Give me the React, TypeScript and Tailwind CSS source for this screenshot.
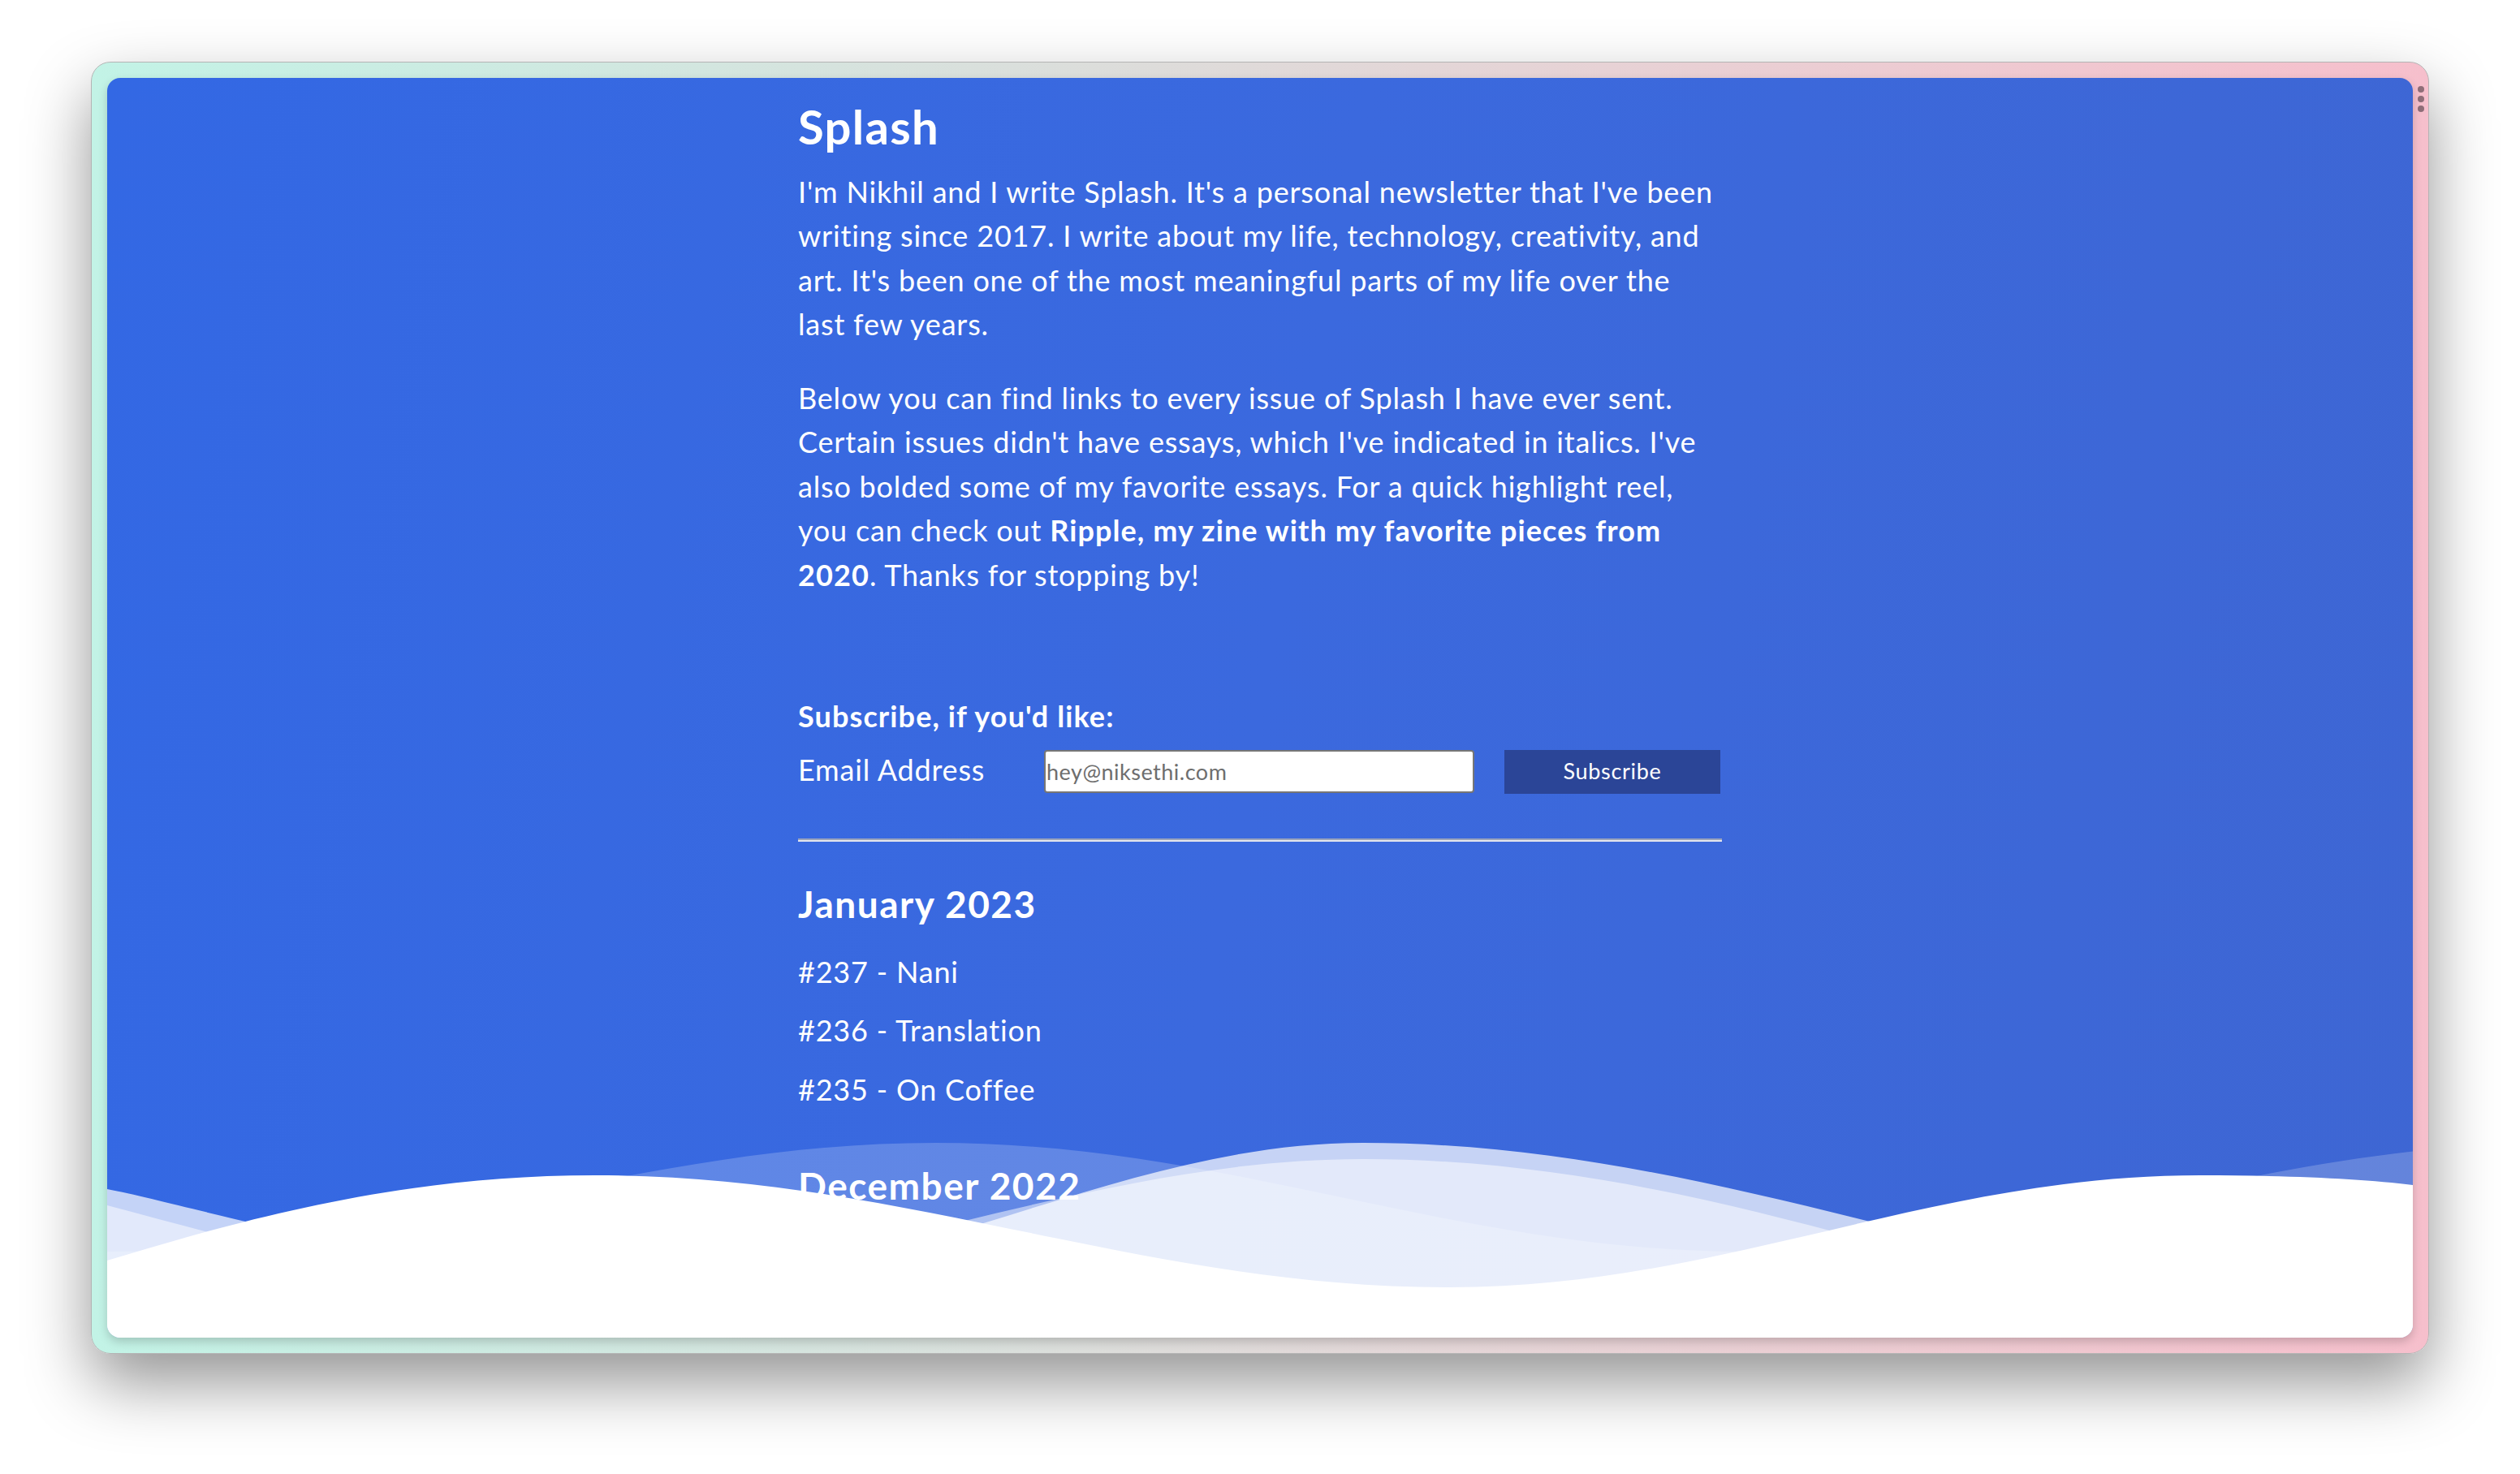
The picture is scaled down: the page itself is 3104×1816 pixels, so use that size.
import React from 'react';

const issues = [
  { id: 237, title: 'Nani' },
  { id: 236, title: 'Translation' },
  { id: 235, title: 'On Coffee' },
];

const Waves = () => (
  <svg
    className="absolute bottom-0 left-0 w-full h-[300px] pointer-events-none"
    viewBox="0 0 2840 300"
    preserveAspectRatio="none"
  >
    {/* back layer */}
    <path
      d="M0,194 C364,194 656,60 1020,60 C1384,60 1656,194 2020,194 C2384,194 2656,60 3020,60 L3020,300 L0,300 Z"
      fill="rgba(255,255,255,0.2)"
    />
    <path
      d="M0,117 C120,140 400,230 700,230 C1000,230 1250,60 1547,60 C1900,60 2200,180 2500,230 L2840,260 L2840,300 L0,300 Z"
      fill="rgba(255,255,255,0.71)"
    />
    <path
      d="M0,137 C200,190 350,235 550,235 C900,235 1200,80 1547,80 C1900,80 2200,200 2400,240 L2840,270 L2840,300 L0,300 Z"
      fill="rgba(255,255,255,0.5)"
    />
    {/* front white */}
    <path
      d="M0,205 C150,160 350,100 601,100 C985,100 1270,238 1654,238 C1990,238 2242,100 2578,100 C2680,100 2780,104 2840,112 L2840,300 L0,300 Z"
      fill="#ffffff"
    />
  </svg>
);

export default function App() {
  return (
    <div className="w-full h-[1816px] bg-white flex justify-center pt-[76px] font-['Lato',sans-serif]">
      <div className="relative w-[2880px] h-[1592px] p-[19px] rounded-[24px] border border-[#b4b4b4] bg-gradient-to-r from-[#c2f3e6] to-[#f6bfcc] shadow-[0_36px_80px_rgba(0,0,0,0.42)]">
        <div className="absolute right-[5px] top-[29px] flex flex-col gap-[4px]">
          <span className="w-[8px] h-[8px] rounded-full bg-[#8f6e78]" />
          <span className="w-[8px] h-[8px] rounded-full bg-[#8f6e78]" />
          <span className="w-[8px] h-[8px] rounded-full bg-[#8f6e78]" />
        </div>

        <div className="relative w-full h-full overflow-hidden rounded-[16px] bg-[linear-gradient(100deg,#3368e4_0%,#3b69de_50%,#3e66d3_100%)] shadow-[0_5px_12px_rgba(0,0,0,0.18)]">
          <div className="w-[1138px] mx-auto pt-[25px] text-white tracking-[0.8px]">
            <h1 className="text-[58px] leading-[1.2] font-bold tracking-[1.3px]">Splash</h1>

            <p className="mt-[18px] text-[36px] leading-[54.5px]">
              I'm Nikhil and I write Splash. It's a personal newsletter that I've been writing since 2017. I write
              about my life, technology, creativity, and art. It's been one of the most meaningful parts of my life
              over the last few years.
            </p>
            <p className="mt-[36px] text-[36px] leading-[54.5px]">
              Below you can find links to every issue of Splash I have ever sent. Certain issues didn't have essays,
              which I've indicated in italics. I've also bolded some of my favorite essays. For a quick highlight reel,
              you can check out{' '}
              <a href="#ripple" className="font-bold tracking-[1.1px]">
                Ripple, my zine with my favorite pieces from 2020
              </a>
              . Thanks for stopping by!
            </p>

            <form className="mt-[120px]" onSubmit={e => e.preventDefault()}>
              <div className="text-[36px] leading-[54.5px] font-bold tracking-[1.1px]">Subscribe, if you'd like:</div>
              <div className="mt-[14px] flex items-center h-[54px]">
                <label htmlFor="email" className="w-[303px] text-[36px] leading-[54.5px] pb-[4px]">
                  Email Address
                </label>
                <input
                  id="email"
                  type="email"
                  placeholder="hey@niksethi.com"
                  className="w-[530px] h-[53px] px-[1px] bg-white border-2 border-[#767676] rounded-[4px] text-[27px] tracking-[0.5px] text-[#222] placeholder:text-[#6e6e6e] outline-none"
                />
                <button
                  type="submit"
                  className="ml-[37px] w-[266px] h-[54px] bg-[#2b4597] text-white text-[27px] tracking-[0.7px]"
                >
                  Subscribe
                </button>
              </div>
            </form>

            <div className="mt-[55px] h-[4px] border-t-2 border-b-2 border-t-[#9aa3bb] border-b-[#e4e6ee]" />

            <h2 className="mt-[49px] text-[46px] leading-[1.2] font-bold tracking-[1.5px]">January 2023</h2>
            <ul className="mt-[29px]">
              {issues.map(issue => (
                <li key={issue.id} className="mb-[18px] text-[36px] leading-[54.5px]">
                  <a href={`#${issue.id}`}>
                    #{issue.id} - {issue.title}
                  </a>
                </li>
              ))}
            </ul>

            <h2 className="mt-[64px] text-[46px] leading-[1.2] font-bold tracking-[1.5px]">December 2022</h2>
          </div>

          <Waves />
        </div>
      </div>
    </div>
  );
}
